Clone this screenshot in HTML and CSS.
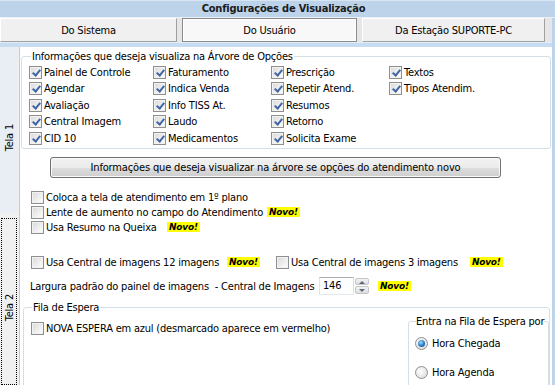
FILE: index.html
```html
<!DOCTYPE html>
<html lang="pt-BR">

<head>
    <meta charset="UTF-8">
    <title>Configurações de Visualização</title>
    <link rel="stylesheet" href="styles.css">
</head>
<body>
    <div class="window">
        <div class="title">Configurações de Visualização</div>
        <div class="tabs">
            <div class="tab">Do Sistema</div>
            <div class="tab active">Do Usuário</div>
            <div class="tab">Da Estação SUPORTE-PC</div>
        </div>
        <div class="band"></div>

        <div class="main">
            <div class="side">
                <div class="vtab active"><span>Tela 1</span></div>
                <div class="vtab focus"><span>Tela 2</span></div>
            </div>

            <div class="panel">
                <fieldset class="group tree">
                    <legend>Informações que deseja visualiza na Árvore de Opções</legend>
                    <div class="tree-grid">
                        <label class="check on"><i class="box"></i>Painel de Controle</label>
                        <label class="check on"><i class="box"></i>Faturamento</label>
                        <label class="check on"><i class="box"></i>Prescrição</label>
                        <label class="check on"><i class="box"></i>Textos</label>

                        <label class="check on"><i class="box"></i>Agendar</label>
                        <label class="check on"><i class="box"></i>Indica Venda</label>
                        <label class="check on"><i class="box"></i>Repetir Atend.</label>
                        <label class="check on"><i class="box"></i>Tipos Atendim.</label>

                        <label class="check on"><i class="box"></i>Avaliação</label>
                        <label class="check on"><i class="box"></i>Info TISS At.</label>
                        <label class="check on"><i class="box"></i>Resumos</label>
                        <span></span>

                        <label class="check on"><i class="box"></i>Central Imagem</label>
                        <label class="check on"><i class="box"></i>Laudo</label>
                        <label class="check on"><i class="box"></i>Retorno</label>
                        <span></span>

                        <label class="check on"><i class="box"></i>CID 10</label>
                        <label class="check on"><i class="box"></i>Medicamentos</label>
                        <label class="check on"><i class="box"></i>Solicita Exame</label>
                        <span></span>
                    </div>
                </fieldset>

                <button class="wide-btn">Informações que deseja visualizar na árvore se opções do atendimento novo</button>

                <div class="options">
                    <div class="opt"><label class="check"><i class="box"></i>Coloca a tela de atendimento em 1º plano</label></div>
                    <div class="opt"><label class="check lbl-lente"><i class="box"></i>Lente de aumento no campo do Atendimento</label><span class="novo">Novo!</span></div>
                    <div class="opt"><label class="check lbl-resumo"><i class="box"></i>Usa Resumo na Queixa</label><span class="novo">Novo!</span></div>
                </div>

                <div class="opt img-row">
                    <label class="check lbl-12"><i class="box"></i>Usa Central de imagens 12 imagens</label>
                    <span class="novo">Novo!</span>
                    <label class="check lbl-3"><i class="box"></i>Usa Central de imagens 3 imagens</label>
                    <span class="novo">Novo!</span>
                </div>

                <div class="width-row">
                    <span class="lbl-width">Largura padrão do painel de imagens&nbsp; - Central de Imagens</span>
                    <span class="spin">
                        <span class="spin-val">146</span>
                        <span class="spin-btns"><i class="up"></i><i class="down"></i></span>
                    </span>
                    <span class="novo novo-width">Novo!</span>
                </div>

                <fieldset class="group queue">
                    <legend>Fila de Espera</legend>
                    <div class="queue-body">
                        <label class="check queue-check"><i class="box"></i>NOVA ESPERA em azul (desmarcado aparece em vermelho)</label>
                        <fieldset class="group enter">
                            <legend>Entra na Fila de Espera por</legend>
                            <label class="radio on"><i class="dot"></i>Hora Chegada</label>
                            <label class="radio"><i class="dot"></i>Hora Agenda</label>
                        </fieldset>
                    </div>
                </fieldset>
            </div>
        </div>
    </div>
</body>

</html>
```

FILE: styles.css
```css
* {
    box-sizing: border-box;
}

body {
    margin: 0;
    width: 555px;
    height: 385px;
    overflow: hidden;
    font-family: "DejaVu Sans Condensed", "Liberation Sans", sans-serif;
    font-size: 11px;
    letter-spacing: -0.2px;
    color: #000;
    background-color: #bcd3ea;
}

.window {
    display: flex;
    flex-direction: column;
    height: 385px;
}

.title {
    height: 18px;
    line-height: 16px;
    text-align: center;
    font-weight: bold;
    color: #1b1b1b;
    padding-left: 12px;
    border-top: 1px solid #d8e6f4;
    border-bottom: 1px solid #e8f0f8;
}

.tabs {
    display: grid;
    grid-template-columns: 177px 175px 183px;
    column-gap: 5px;
    height: 24px;
    margin-right: 3px;
    background-color: #e6e6e6;
}

.tab {
    display: flex;
    align-items: center;
    justify-content: center;
    background-color: #f0f0f0;
    border: 1px solid;
    border-color: #ffffff #a0a0a0 #a0a0a0 #ffffff;
}

.tab.active {
    background-color: #f8f8f8;
    border-color: #8a8a8a;
    box-shadow: inset 0 0 0 1px #ffffff;
}

.band {
    height: 5px;
    margin-right: 3px;
    background-color: #c7dcf1;
    border-top: 1px solid #e4eef8;
}

.main {
    flex: 1;
    display: flex;
    margin-right: 3px;
    min-height: 0;
}

.side {
    width: 20px;
    display: flex;
    flex-direction: column;
    background-color: #f0f0f0;
    border-right: 1px solid #b5cce4;
}

.vtab {
    display: flex;
    align-items: center;
    justify-content: center;
}

.vtab span {
    writing-mode: vertical-rl;
    transform: rotate(180deg);
}

.vtab.active {
    height: 166px;
    padding-top: 16px;
    margin-right: 1px;
    background-color: #e9eef5;
}

.vtab.focus {
    flex: 1;
    margin: 5px 2px 0 1px;
    padding-top: 12px;
    border: 1px dotted #000;
}

.panel {
    flex: 1;
    background-color: #ffffff;
    overflow: hidden;
}

/* group boxes */

.group {
    margin: 0;
    border: 1px solid #d5dfe5;
    border-radius: 3px;
    min-width: 0;
}

.group legend {
    padding: 0 1px;
    line-height: 13px;
    white-space: nowrap;
}

.tree {
    margin: 3px 1px 0 1px;
    padding: 1px 0 1px 7px;
}

.tree legend {
    margin-left: 2px;
}

.tree-grid {
    display: grid;
    grid-template-columns: 124px 118px 118px 1fr;
    grid-auto-rows: 16.5px;
}

/* checkbox + radio */

.check,
.radio {
    display: flex;
    align-items: center;
    white-space: nowrap;
}

.box {
    position: relative;
    flex: none;
    width: 13px;
    height: 13px;
    margin-right: 2px;
    border: 1px solid #8e8f8f;
    background: linear-gradient(135deg, #d8d8d8, #f4f4f4 70%, #ffffff);
    box-shadow: inset 0 0 0 1px #f2f2f2;
}

.check.on .box::after {
    content: "";
    position: absolute;
    left: 3.5px;
    top: 1px;
    width: 3px;
    height: 6px;
    border: solid #4066a8;
    border-width: 0 2px 2px 0;
    transform: rotate(40deg);
}

.dot {
    position: relative;
    flex: none;
    width: 13px;
    height: 13px;
    margin-right: 4px;
    border: 1px solid #8e8f8f;
    border-radius: 50%;
    background: radial-gradient(circle at 40% 40%, #ffffff, #d6d6d6);
}

.radio.on .dot::after {
    content: "";
    position: absolute;
    left: 2px;
    top: 2px;
    width: 7px;
    height: 7px;
    border-radius: 50%;
    background: radial-gradient(circle at 40% 35%, #9fdcff, #2a7ac6 55%, #0d3f7c);
}

/* button */

.wide-btn {
    display: block;
    width: 451px;
    height: 21px;
    margin: 8px 0 0 30px;
    padding: 0;
    font: inherit;
    letter-spacing: -0.15px;
    color: #000;
    border: 1px solid #707070;
    border-radius: 3px;
    background: linear-gradient(#f2f2f2 0%, #ebebeb 50%, #dddddd 51%, #cfcfcf 100%);
    box-shadow: inset 0 0 0 1px #fbfbfb;
}

/* option rows */

.options {
    margin-top: 12px;
    padding-left: 11px;
}

.opt {
    display: flex;
    align-items: center;
    height: 15px;
}

.novo {
    background-color: #ffff00;
    font-family: "DejaVu Sans", sans-serif;
    font-size: 9px;
    font-weight: bold;
    font-style: italic;
    line-height: 10px;
    padding: 0 2px;
    letter-spacing: -0.2px;
}

.lbl-lente {
    width: 236px;
}

.lbl-resumo {
    width: 136px;
}

.img-row {
    margin-top: 20px;
    padding-left: 11px;
}

.lbl-12 {
    width: 196px;
}

.lbl-3 {
    width: 194px;
    margin-left: 16px;
}

.width-row {
    display: flex;
    align-items: center;
    height: 18px;
    margin-top: 7px;
    padding-left: 10px;
    white-space: nowrap;
}

.lbl-width {
    width: 289px;
    padding-top: 2px;
}

.spin {
    display: flex;
    align-items: stretch;
    height: 18px;
}

.spin-val {
    width: 35px;
    padding: 1px 0 0 3px;
    border: 1px solid #abadb3;
    border-color: #abadb3 #dbdfe6 #e3e9ef #e2e3ea;
}

.spin-btns {
    display: flex;
    flex-direction: column;
    gap: 1px;
    width: 14px;
    margin-left: 1px;
    padding: 1px 0;
}

.spin-btns i {
    position: relative;
    flex: 1;
    border: 1px solid #c5c5c5;
    border-radius: 2px;
    background: linear-gradient(#f4f4f4, #dedede);
}

.spin-btns i::after {
    content: "";
    position: absolute;
    left: 3px;
    top: 2px;
    border-left: 3px solid transparent;
    border-right: 3px solid transparent;
}

.spin-btns .up::after {
    border-bottom: 3px solid #5a6a80;
}

.spin-btns .down::after {
    border-top: 3px solid #5a6a80;
}

.novo-width {
    margin-left: 9px;
}

/* fila de espera */

.queue {
    margin: 6px 2px 0 3px;
    padding: 1px 0 0 7px;
    height: 120px;
}

.queue legend {
    margin-left: 1px;
}

.queue-body {
    display: flex;
    justify-content: space-between;
    align-items: flex-start;
}

.queue-check {
    margin-top: 7px;
}

.enter {
    width: 141px;
    padding: 0 0 0 6px;
    height: 80px;
}

.enter legend {
    padding: 0;
}

.enter .radio {
    height: 15px;
    margin-top: 8px;
}

.enter .radio + .radio {
    margin-top: 14px;
}
```
